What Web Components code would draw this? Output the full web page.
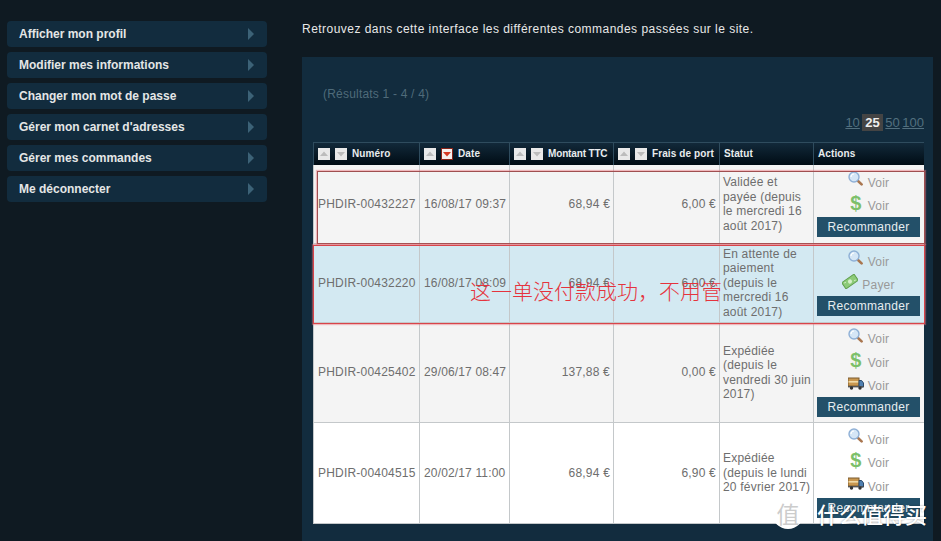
<!DOCTYPE html>
<html lang="fr">
<head>
<meta charset="utf-8">
<title>Commandes</title>
<style>
    html, body {
        margin: 0;
        height: 100%;
        overflow: hidden;
        background: #0f1a22;
        font-family: "Liberation Sans", Arial, sans-serif;
    }
</style>
</head>
<body>
<app-page></app-page>

<script>
const ICONS = {
    loupe: `<svg width="15" height="15" viewBox="0 0 15 15"><path d="M9 9l4.6 4.4" stroke="#a9764f" stroke-width="2.6" stroke-linecap="round"/><circle cx="6" cy="6" r="5" fill="#d5e6f6" stroke="#8fb0d6" stroke-width="1.4"/><path d="M3 6a3 3 0 0 1 3-3" stroke="#fff" stroke-width="1.2" fill="none"/></svg>`,
    truck: `<svg width="16" height="13" viewBox="0 0 16 13"><rect x="0" y="1" width="11" height="8" fill="#c9974f" stroke="#7d5c30" stroke-width="1"/><rect x="0.5" y="4" width="10" height="1.6" fill="#efd9a6"/><path d="M11 3.5h2.6L15.5 6v4H11z" fill="#4f7fb0" stroke="#2d4a68" stroke-width="1"/><rect x="0" y="9" width="15.5" height="1.4" fill="#555"/><circle cx="3.5" cy="11" r="1.7" fill="#333"/><circle cx="12" cy="11" r="1.7" fill="#333"/></svg>`,
    bill: `<svg width="17" height="15" viewBox="0 0 17 15"><g transform="rotate(-35 8.5 7.5)"><rect x="0.5" y="3.5" width="16" height="8" fill="#8ccb78" stroke="#5d9c4b" stroke-width="1"/><circle cx="8.5" cy="7.5" r="2.2" fill="#d5efc8"/><path d="M2.5 5.5h2M12.5 9.5h2" stroke="#d5efc8"/></g></svg>`
};

class SideMenu extends HTMLElement {
    constructor() {
        super();
        this.attachShadow({ mode: "open" }).innerHTML = `
            <style>
                :host {
                    display: flex;
                    flex-direction: column;
                    gap: 5px;
                    width: 260px;
                    flex: none;
                }
            </style>
            <slot></slot>
        `;
    }
}

class MenuItem extends HTMLElement {
    constructor() {
        super();
        this.attachShadow({ mode: "open" }).innerHTML = `
            <style>
                :host {
                    display: flex;
                    align-items: center;
                    justify-content: space-between;
                    height: 26px;
                    padding: 0 13px 0 12px;
                    border-radius: 4px;
                    background: #122c3e;
                    color: #e4e6e6;
                    font-size: 12px;
                    font-weight: bold;
                }
                .fleche {
                    width: 0;
                    height: 0;
                    border-left: 6px solid #3c6277;
                    border-top: 6px solid transparent;
                    border-bottom: 6px solid transparent;
                }
            </style>
            <span><slot></slot></span>
            <span class="fleche"></span>
        `;
    }
}

class SortButton extends HTMLElement {
    constructor() {
        super();
        this.attachShadow({ mode: "open" });
    }

    connectedCallback() {
        const bas = this.getAttribute("sens") === "bas";
        const actif = this.hasAttribute("actif");
        const couleur = actif ? "#d63a24" : "#bcbcbc";
        const fond = actif ? "#f6f0ee" : "#e9e9e9";
        const bord = actif ? "#8a2418" : "#e9e9e9";
        this.shadowRoot.innerHTML = `
            <style>
                :host {
                    display: block;
                    flex: none;
                    width: 12px;
                    height: 12px;
                }
                svg { display: block; }
            </style>
            <svg width="12" height="12" viewBox="0 0 12 12">
                <rect x="0.5" y="0.5" width="11" height="11" fill="${fond}" stroke="${bord}"/>
                <path d="${bas ? "M2 4h8l-4 4.5z" : "M2 8h8l-4-4.5z"}" fill="${couleur}"/>
            </svg>
        `;
    }
}

class HeadCell extends HTMLElement {
    constructor() {
        super();
        const triable = this.hasAttribute("triable");
        const actif = this.hasAttribute("actif");
        this.attachShadow({ mode: "open" }).innerHTML = `
            <style>
                :host {
                    display: flex;
                    align-items: center;
                    gap: 5px;
                    padding-left: 4px;
                    border-left: 1px solid #2f4c5e;
                    color: #e8ecee;
                    font-size: 10px;
                    font-weight: bold;
                    letter-spacing: 0.1px;
                    white-space: nowrap;
                }
                span { margin-bottom: 2px; }
            </style>
            ${triable ? `<sort-button sens="haut"></sort-button><sort-button sens="bas" ${actif ? "actif" : ""}></sort-button>` : ""}
            <span><slot></slot></span>
        `;
    }
}

class OrderTable extends HTMLElement {
    constructor() {
        super();
        this.attachShadow({ mode: "open" }).innerHTML = `
            <style>
                :host {
                    display: block;
                    width: 611px;
                    --colonnes: 106px 90px 104px 106px 94px 111px;
                }
                .tete {
                    display: grid;
                    grid-template-columns: var(--colonnes);
                    height: 23px;
                    background: linear-gradient(#12293a, #000c14);
                    border-top: 1px solid #2f4c5e;
                    box-sizing: border-box;
                }
            </style>
            <div class="tete"><slot name="tete"></slot></div>
            <slot></slot>
        `;
    }
}

class OrderRow extends HTMLElement {
    constructor() {
        super();
        this.attachShadow({ mode: "open" });
    }

    connectedCallback() {
        const a = (nom) => this.getAttribute(nom);
        this.shadowRoot.innerHTML = `
            <style>
                :host {
                    display: grid;
                    grid-template-columns: var(--colonnes);
                    height: ${a("hauteur")}px;
                    box-sizing: border-box;
                    border-bottom: 1px solid #c4c8ca;
                    background: ${a("fond")};
                    color: #6e6e6e;
                    font-size: 12px;
                    letter-spacing: 0.2px;
                }
                .c {
                    display: flex;
                    align-items: center;
                    box-sizing: border-box;
                    border-left: 1px solid #c4c8ca;
                    padding: 0 3px 1px 4px;
                    white-space: nowrap;
                }
                .c:first-child { padding-left: 2px; }
                .date { letter-spacing: 0.15px; }
                .num { justify-content: flex-end; }
                .statut {
                    padding: 0 3px;
                    line-height: 14.5px;
                }
                .actions {
                    flex-direction: column;
                    justify-content: center;
                    padding: 0.6px 4px 0 3px;
                }
                button-commande { margin: -0.6px 0 0.6px; }
                ::slotted([slot="statut"]) { display: block; }
            </style>
            <div class="c">${a("numero")}</div>
            <div class="c date">${a("date")}</div>
            <div class="c num">${a("montant")}</div>
            <div class="c num">${a("port")}</div>
            <div class="c statut"><slot name="statut"></slot></div>
            <div class="c actions">
                <slot></slot>
                <button-commande>Recommander</button-commande>
            </div>
        `;
    }
}

class ActionLink extends HTMLElement {
    constructor() {
        super();
        const icone = this.getAttribute("icone");
        let dessin = ICONS[icone] || "";
        if (icone === "dollar") {
            dessin = `<span class="dollar">$</span>`;
        }
        const haut = icone === "loupe" ? -4 : -3;
        this.attachShadow({ mode: "open" }).innerHTML = `
            <style>
                :host {
                    display: flex;
                    align-items: center;
                    justify-content: center;
                    gap: 4px;
                    height: 23.3px;
                    width: 100%;
                    color: #999;
                }
                .ic {
                    display: flex;
                    justify-content: center;
                    width: 16px;
                    position: relative;
                    top: ${haut}px;
                }
                .dollar {
                    font: bold 20px/16px "Liberation Sans", sans-serif;
                    color: #7cc06a;
                    letter-spacing: 0;
                }
            </style>
            <span class="ic">${dessin}</span>
            <span><slot></slot></span>
        `;
    }
}

class ButtonCommande extends HTMLElement {
    constructor() {
        super();
        this.attachShadow({ mode: "open" }).innerHTML = `
            <style>
                :host {
                    display: flex;
                    flex: none;
                    align-items: center;
                    justify-content: center;
                    width: 103px;
                    height: 20px;
                    background: #235069;
                    color: #e6edf0;
                    font-size: 12px;
                    letter-spacing: 0.3px;
                }
            </style>
            <slot></slot>
        `;
    }
}

class PageSizes extends HTMLElement {
    constructor() {
        super();
        this.attachShadow({ mode: "open" }).innerHTML = `
            <style>
                :host {
                    display: flex;
                    justify-content: flex-end;
                    gap: 2.5px;
                    height: 17px;
                    color: #53707f;
                    font-size: 13px;
                    line-height: 17px;
                }
                span { text-decoration: underline; }
                b {
                    padding: 0 3px;
                    background: #444;
                    color: #eee;
                    font-weight: bold;
                }
            </style>
            <span>10</span><b>25</b><span>50</span><span>100</span>
        `;
    }
}

class AppPage extends HTMLElement {
    constructor() {
        super();
        this.attachShadow({ mode: "open" }).innerHTML = `
            <style>
                :host {
                    display: flex;
                    gap: 35px;
                    height: 541px;
                    box-sizing: border-box;
                    padding: 21px 8px 0 7px;
                    overflow: hidden;
                    position: relative;
                }
                main {
                    display: flex;
                    flex-direction: column;
                    width: 631px;
                }
                .intro {
                    height: 36px;
                    color: #e8e8e8;
                    font-size: 12px;
                    letter-spacing: 0.47px;
                    line-height: 16px;
                }
                .panneau {
                    flex: 1;
                    background: #122c3e;
                    padding: 30px 9px 0 11px;
                }
                .resultats {
                    height: 27px;
                    padding-left: 10px;
                    color: #4f6b7a;
                    font-size: 12px;
                    line-height: 14px;
                    letter-spacing: 0.2px;
                }
                page-sizes { margin-bottom: 11px; }
                .cadre {
                    position: absolute;
                    border: 1px solid #d8444a;
                    box-shadow: 0 0 1px 1px rgba(235, 110, 120, .45);
                    box-sizing: border-box;
                    pointer-events: none;
                }
                .sombre { border-color: #a04f50; }
                .note {
                    position: absolute;
                    left: 470px;
                    top: 277px;
                    color: #e5333d;
                    font: 300 21px/26px "Noto Sans CJK SC", sans-serif;
                    white-space: nowrap;
                }
                .marque {
                    position: absolute;
                    left: 772px;
                    top: 497px;
                    display: flex;
                    align-items: center;
                    gap: 13px;
                    color: #fff;
                    white-space: nowrap;
                }
                .marque i {
                    display: flex;
                    align-items: center;
                    justify-content: center;
                    width: 32px;
                    height: 32px;
                    border-radius: 50%;
                    background: #fff;
                    color: #ccc;
                    font: normal 23px "Noto Sans CJK SC", sans-serif;
                }
                .marque span {
                    font: 500 22px/26px "Noto Sans CJK SC", sans-serif;
                    text-shadow: 0 0 2px rgba(0,0,0,.4);
                }
            </style>
            <side-menu>
                <menu-item>Afficher mon profil</menu-item>
                <menu-item>Modifier mes informations</menu-item>
                <menu-item>Changer mon mot de passe</menu-item>
                <menu-item>Gérer mon carnet d'adresses</menu-item>
                <menu-item>Gérer mes commandes</menu-item>
                <menu-item>Me déconnecter</menu-item>
            </side-menu>
            <main>
                <div class="intro">Retrouvez dans cette interface les différentes commandes passées sur le site.</div>
                <div class="panneau">
                    <div class="resultats">(Résultats 1 - 4 / 4)</div>
                    <page-sizes></page-sizes>
                    <order-table>
                        <head-cell slot="tete" triable>Numéro</head-cell>
                        <head-cell slot="tete" triable actif>Date</head-cell>
                        <head-cell slot="tete" triable style="letter-spacing:-0.15px">Montant TTC</head-cell>
                        <head-cell slot="tete" triable>Frais de port</head-cell>
                        <head-cell slot="tete">Statut</head-cell>
                        <head-cell slot="tete">Actions</head-cell>

                        <order-row hauteur="79" fond="#f4f4f4" numero="PHDIR-00432227" date="16/08/17 09:37" montant="68,94 €" port="6,00 €">
                            <span slot="statut">Validée et<br>payée (depuis<br>le mercredi 16<br>août 2017)</span>
                            <action-link icone="loupe">Voir</action-link>
                            <action-link icone="dollar">Voir</action-link>
                        </order-row>
                        <order-row hauteur="79" fond="#d3e9f2" numero="PHDIR-00432220" date="16/08/17 08:09" montant="68,94 €" port="6,00 €">
                            <span slot="statut">En attente de<br>paiement<br>(depuis le<br>mercredi 16<br>août 2017)</span>
                            <action-link icone="loupe">Voir</action-link>
                            <action-link icone="bill">Payer</action-link>
                        </order-row>
                        <order-row hauteur="100" fond="#f4f4f4" numero="PHDIR-00425402" date="29/06/17 08:47" montant="137,88 €" port="0,00 €">
                            <span slot="statut">Expédiée<br>(depuis le<br>vendredi 30 juin<br>2017)</span>
                            <action-link icone="loupe">Voir</action-link>
                            <action-link icone="dollar">Voir</action-link>
                            <action-link icone="truck">Voir</action-link>
                        </order-row>
                        <order-row hauteur="101" fond="#ffffff" numero="PHDIR-00404515" date="20/02/17 11:00" montant="68,94 €" port="6,90 €">
                            <span slot="statut">Expédiée<br>(depuis le lundi<br>20 février 2017)</span>
                            <action-link icone="loupe">Voir</action-link>
                            <action-link icone="dollar">Voir</action-link>
                            <action-link icone="truck">Voir</action-link>
                        </order-row>
                    </order-table>
                </div>
            </main>
            <div class="cadre sombre" style="left:317px;top:171px;width:608px;height:73px"></div>
            <div class="cadre" style="left:313px;top:245px;width:612px;height:79px"></div>
            <div class="note">这一单没付款成功，不用管</div>
            <div class="marque"><i>值</i><span>什么值得买</span></div>
        `;
    }
}

customElements.define("side-menu", SideMenu);
customElements.define("menu-item", MenuItem);
customElements.define("sort-button", SortButton);
customElements.define("head-cell", HeadCell);
customElements.define("order-table", OrderTable);
customElements.define("order-row", OrderRow);
customElements.define("action-link", ActionLink);
customElements.define("button-commande", ButtonCommande);
customElements.define("page-sizes", PageSizes);
customElements.define("app-page", AppPage);
</script>
</body>
</html>
